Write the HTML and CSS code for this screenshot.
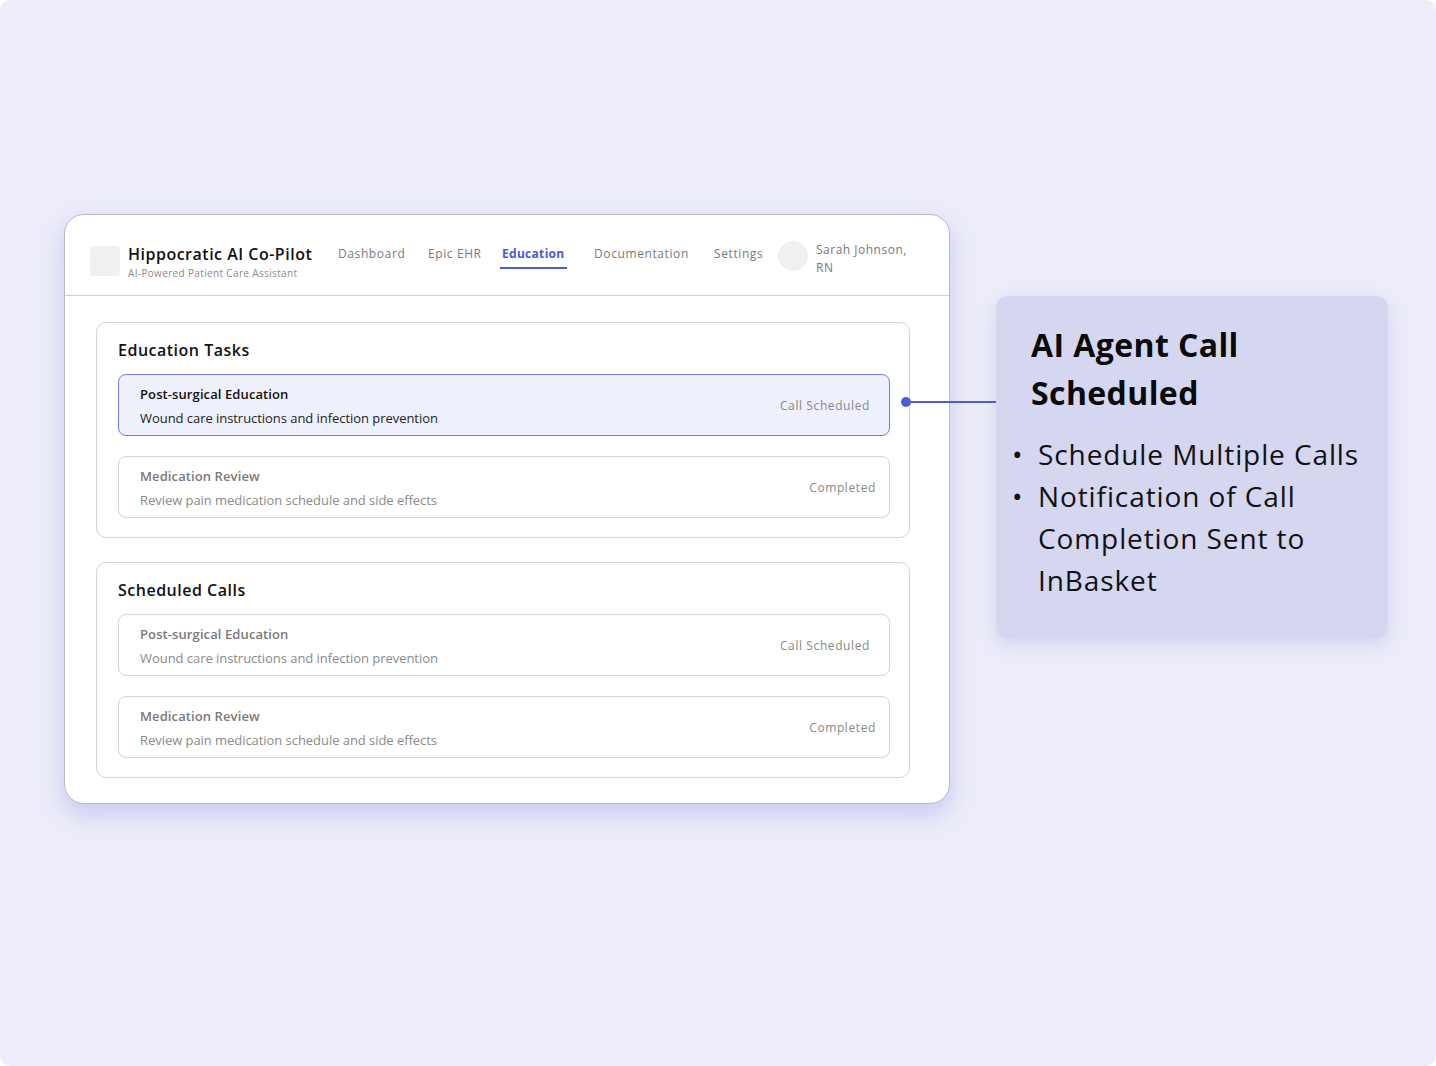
FILE: index.html
```html
<!DOCTYPE html>
<html lang="en">
<head>
<meta charset="utf-8">
<title>Hippocratic AI Co-Pilot</title>
<link rel="stylesheet" href="styles.css">
</head>
<body>
<div class="page">
  <div class="app-card">
    <header class="app-header">
      <div class="brand">
        <div class="logo"></div>
        <div class="brand-text">
          <div class="brand-title">Hippocratic AI Co-Pilot</div>
          <div class="brand-sub">AI-Powered Patient Care Assistant</div>
        </div>
      </div>
      <nav class="nav">
        <div class="nav-cell"><span class="nav-link">Dashboard</span></div>
        <div class="nav-cell"><span class="nav-link">Epic EHR</span></div>
        <div class="nav-cell"><span class="nav-link active">Education</span></div>
        <div class="nav-cell"><span class="nav-link">Documentation</span></div>
        <div class="nav-cell"><span class="nav-link">Settings</span></div>
      </nav>
      <div class="user">
        <div class="avatar"></div>
        <div class="user-name">Sarah Johnson, RN</div>
      </div>
    </header>
    <main class="app-body">
      <section class="panel">
        <h2 class="panel-title">Education Tasks</h2>
        <div class="task highlight">
          <div class="task-text">
            <div class="task-title">Post-surgical Education</div>
            <div class="task-desc">Wound care instructions and infection prevention</div>
          </div>
          <div class="task-status">Call Scheduled</div>
        </div>
        <div class="task muted">
          <div class="task-text">
            <div class="task-title">Medication Review</div>
            <div class="task-desc">Review pain medication schedule and side effects</div>
          </div>
          <div class="task-status done">Completed</div>
        </div>
      </section>
      <section class="panel">
        <h2 class="panel-title">Scheduled Calls</h2>
        <div class="task muted">
          <div class="task-text">
            <div class="task-title">Post-surgical Education</div>
            <div class="task-desc">Wound care instructions and infection prevention</div>
          </div>
          <div class="task-status">Call Scheduled</div>
        </div>
        <div class="task muted">
          <div class="task-text">
            <div class="task-title">Medication Review</div>
            <div class="task-desc">Review pain medication schedule and side effects</div>
          </div>
          <div class="task-status done">Completed</div>
        </div>
      </section>
    </main>
  </div>

  <aside class="callout">
    <h1 class="callout-title">AI Agent Call Scheduled</h1>
    <ul class="callout-list">
      <li>Schedule Multiple Calls</li>
      <li>Notification of Call Completion Sent to InBasket</li>
    </ul>
  </aside>

  <div class="connector"><span class="dot"></span><span class="line"></span></div>
</div>
</body>
</html>
```

FILE: styles.css
```css
* { box-sizing: border-box; }

html, body {
  margin: 0;
  padding: 0;
  background: #ffffff;
}

body {
  font-family: "Open Sans", "Liberation Sans", sans-serif;
  color: #111111;
}

.page {
  position: relative;
  width: 1436px;
  height: 1066px;
  background: #ededf9;
  border-radius: 10px;
  display: flex;
  align-items: flex-start;
  padding: 214px 0 0 64px;
}

/* ---------- App card ---------- */
.app-card {
  width: 886px;
  height: 590px;
  background: #ffffff;
  border: 1px solid #b9b9c4;
  border-radius: 20px;
  box-shadow: 0 10px 24px rgba(96, 108, 222, 0.28);
  overflow: hidden;
  flex: none;
}

.app-header {
  height: 81px;
  border-bottom: 1px solid #cfcfd6;
  display: flex;
  align-items: flex-start;
  padding: 26px 0 0 25px;
}

.brand {
  width: 246px;
  display: flex;
  align-items: center;
  gap: 8px;
  margin-top: 1px;
  flex: none;
}

.logo {
  width: 30px;
  height: 30px;
  border-radius: 4px;
  background: #f0f0f0;
  flex: none;
}

.brand-title {
  font-size: 16px;
  line-height: 24px;
  font-weight: 600;
  color: #111111;
  white-space: nowrap;
  letter-spacing: 0.5px;
}

.brand-sub {
  font-size: 10px;
  line-height: 14px;
  color: #8a8a8a;
  white-space: nowrap;
  letter-spacing: 0.35px;
}

.nav {
  display: grid;
  grid-template-columns: 90px 74px 92px 120px 66px;
  margin-top: 4px;
  flex: none;
}

.nav-cell { display: flex; }

.nav-link {
  display: inline-block;
  font-size: 12px;
  line-height: 18px;
  color: #7a7a7a;
  padding: 0 2px 4px;
  border-bottom: 2px solid transparent;
  white-space: nowrap;
  letter-spacing: 0.6px;
}

.nav-link.active {
  color: #4a5bd6;
  font-weight: 700;
  letter-spacing: 0.3px;
  border-bottom-color: #4a5bd6;
}

.user {
  display: flex;
  align-items: flex-start;
  gap: 8px;
}

.avatar {
  width: 30px;
  height: 30px;
  border-radius: 50%;
  background: #f0f0f0;
  flex: none;
}

.user-name {
  width: 100px;
  font-size: 12px;
  line-height: 18px;
  color: #7a7a7a;
  letter-spacing: 0.5px;
}

.app-body {
  padding: 26px 0 0 31px;
  display: flex;
  flex-direction: column;
  gap: 24px;
}

.panel {
  width: 814px;
  border: 1px solid #d3d3d8;
  border-radius: 10px;
  padding: 15px 19px 19px 21px;
  display: flex;
  flex-direction: column;
  gap: 20px;
}

.panel-title {
  margin: 0 0 -8px;
  font-size: 16px;
  line-height: 24px;
  font-weight: 600;
  color: #111111;
  letter-spacing: 0.5px;
}

.task {
  height: 62px;
  border: 1px solid #d3d3d8;
  border-radius: 8px;
  padding: 8px 19px 7px 21px;
  display: flex;
  align-items: center;
  justify-content: space-between;
}

.task.highlight {
  background: #eef0fc;
  border-color: #6d7de4;
}

.task-title {
  font-size: 13px;
  line-height: 20px;
  font-weight: 600;
  margin-bottom: 4px;
  color: #111111;
  letter-spacing: 0.1px;
}

.task-desc {
  font-size: 13px;
  line-height: 20px;
  color: #222222;
  letter-spacing: -0.05px;
}

.task.muted .task-title { color: #7a7a7a; }
.task.muted .task-desc { color: #8a8a8a; }

.task-status {
  font-size: 12px;
  line-height: 18px;
  color: #888888;
  letter-spacing: 0.6px;
}

.task-status.done { margin-right: -6px; }

/* ---------- Callout ---------- */
.callout {
  margin: 82px 0 0 46px;
  width: 392px;
  height: 342px;
  background: #d5d6f0;
  border-radius: 12px;
  box-shadow: 0 6px 18px rgba(120, 128, 220, 0.25);
  padding: 25px 20px 0 35px;
  flex: none;
}

.callout-title {
  margin: 0;
  width: 260px;
  font-size: 32px;
  line-height: 48px;
  font-weight: 700;
  color: #0a0a0a;
  letter-spacing: 0.4px;
}

.callout-list {
  list-style: none;
  margin: 16px 0 0 -19px;
  padding: 0;
}

.callout-list li {
  display: flex;
  font-size: 28px;
  line-height: 42px;
  color: #111111;
  letter-spacing: 0.9px;
}

.callout-list li::before {
  content: "\2022";
  flex: none;
  width: 26px;
  letter-spacing: 0;
}

/* ---------- Connector (overlay) ---------- */
.connector {
  position: absolute;
  left: 901px;
  top: 397px;
  width: 95px;
  height: 10px;
  display: flex;
  align-items: center;
}

.connector .dot {
  width: 10px;
  height: 10px;
  border-radius: 50%;
  background: #4a5bd6;
  flex: none;
}

.connector .line {
  flex: 1;
  height: 2px;
  background: #4a5bd6;
}
```
